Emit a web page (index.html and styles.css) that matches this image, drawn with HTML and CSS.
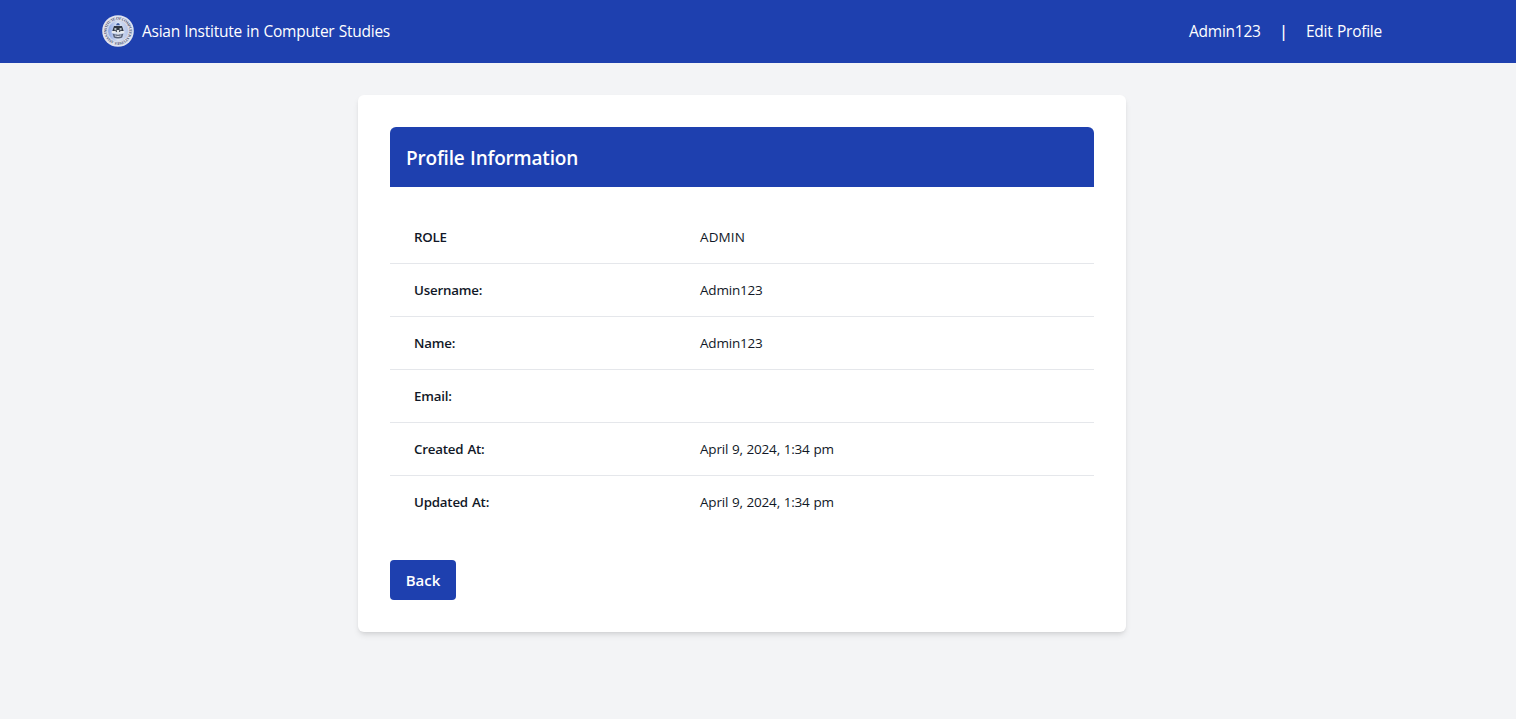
FILE: index.html
```html
<!DOCTYPE html>
<html lang="en">
<head>
<meta charset="utf-8">
<title>Profile Information</title>
<link rel="stylesheet" href="styles.css">
</head>
<body>
<header class="topbar">
  <nav class="topbar-inner">
    <a class="brand">
      <svg class="logo" viewBox="0 0 32 32" aria-hidden="true">
        <defs>
          <linearGradient id="disc" x1="0" y1="0" x2="1" y2="0"><stop offset="0" stop-color="#86a0e2"/><stop offset=".5" stop-color="#dce4f4"/><stop offset="1" stop-color="#b3c2e8"/></linearGradient>
          <path id="ring" d="M12.200 26.500A11.200 11.200 0 1 1 19.800 26.500A11.200 11.200 0 0 1 12.200 26.500"/>
        </defs>
        <circle cx="16" cy="16" r="15.8" fill="#e0e3f0"/>
        <text class="seal-text"><textPath href="#ring" textLength="69">ASIAN INSTITUTE OF COMPUTER STUDIES</textPath></text>
        <circle cx="16" cy="16" r="10.3" fill="url(#disc)" stroke="#c9d0e6" stroke-width=".8"/>
        <path d="M14 10.200l1-2h2l1 2z" fill="#36559d"/>
        <path d="M10 17l2-6h8l2 6z" fill="#2e3542"/>
        <path d="M12.400 13h2v2.200h-2zM17.600 13h2v2.200h-2z" fill="#b5bec9"/>
        <path d="M9.800 16h4v2.200h-4zM18.200 16h4v2.200h-4z" fill="#e8ebee"/>
        <path d="M14.800 15h2.400v4h-2.400z" fill="#dfe3e8"/>
        <path d="M10.600 18.600c3 1.600 7.800 1.600 10.800 0l-1.200 4c-2.400 1.200-6 1.200-8.400 0z" fill="#566077"/>
        <path d="M12.800 20.800c2 .8 4.400 .8 6.400 0" fill="none" stroke="#e7ebf4" stroke-width="1"/>
      </svg>
      <span class="brand-name">Asian Institute in Computer Studies</span>
    </a>
    <div class="links">
      <a class="user">Admin123</a>
      <span class="divider">|</span>
      <a class="edit">Edit Profile</a>
    </div>
  </nav>
</header>
<main class="card">
  <h1 class="card-title">Profile Information</h1>
  <dl class="details">
    <div class="row"><dt>ROLE</dt><dd class="upper">ADMIN</dd></div>
    <div class="row"><dt>Username:</dt><dd>Admin123</dd></div>
    <div class="row"><dt>Name:</dt><dd>Admin123</dd></div>
    <div class="row"><dt>Email:</dt><dd></dd></div>
    <div class="row"><dt>Created At:</dt><dd>April 9, 2024, 1:34 pm</dd></div>
    <div class="row"><dt>Updated At:</dt><dd>April 9, 2024, 1:34 pm</dd></div>
  </dl>
  <a class="back">Back</a>
</main>
</body>
</html>
```
FILE: styles.css
```css
* { box-sizing: border-box; margin: 0; padding: 0; }
body {
  min-height: 100vh;
  background: #f3f4f6;
  font-family: "Open Sans", "Noto Sans", sans-serif;
  font-size: 15.5px;
  line-height: 24px;
  color: #111827;
}
.topbar { height: 63px; padding-right: 32px; background: #1e40af; color: #fff; }
.topbar-inner {
  display: flex;
  align-items: center;
  justify-content: space-between;
  width: 1280px;
  height: 62px;
  margin: 0 auto;
}
.brand { display: flex; align-items: center; gap: 8px; }
.logo { display: block; width: 32px; height: 32px; }
.seal-text { font-family: "Liberation Serif", serif; font-size: 4px; font-weight: 700; fill: #4b5470; }
.brand-name { letter-spacing: -0.26px; word-spacing: 0.6px; }
.links { display: flex; align-items: center; }
.user { width: 72px; letter-spacing: -0.24px; white-space: nowrap; }
.divider { width: 45px; text-align: center; font-weight: 600; }
.edit { width: 76px; letter-spacing: -0.24px; word-spacing: 0.6px; white-space: nowrap; }
.card {
  width: 768px;
  height: 537px;
  margin: 32px 0 0 358px;
  padding: 32px;
  background: #fff;
  border-radius: 6px;
  box-shadow: 0 4px 6px -1px rgba(0, 0, 0, .1), 0 2px 4px -2px rgba(0, 0, 0, .1);
}
.card-title {
  padding: 17px 16px 15px;
  border-radius: 6px 6px 0 0;
  background: #1e40af;
  color: #fff;
  font-size: 19px;
  font-weight: 600;
  line-height: 28px;
  letter-spacing: -0.2px;
  word-spacing: 0.8px;
}
.details { padding-top: 24px; font-size: 13.5px; line-height: 20px; }
.row { display: grid; grid-template-columns: 286px 1fr; height: 53px; padding: 16px 24px; border-bottom: 1px solid #e5e7eb; }
.row:last-child { border-bottom: 0; }
dt { font-size: 13.3px; font-weight: 600; letter-spacing: -0.2px; word-spacing: 0.8px; }
dd { letter-spacing: -0.2px; word-spacing: 0.5px; }
.upper { letter-spacing: 0.1px; }
.back {
  display: block;
  width: 66px;
  height: 40px;
  margin-top: 31px;
  padding: 8px 0;
  border-radius: 4px;
  background: #1e40af;
  color: #fff;
  font-size: 15px;
  font-weight: 600;
  text-align: center;
}
```
